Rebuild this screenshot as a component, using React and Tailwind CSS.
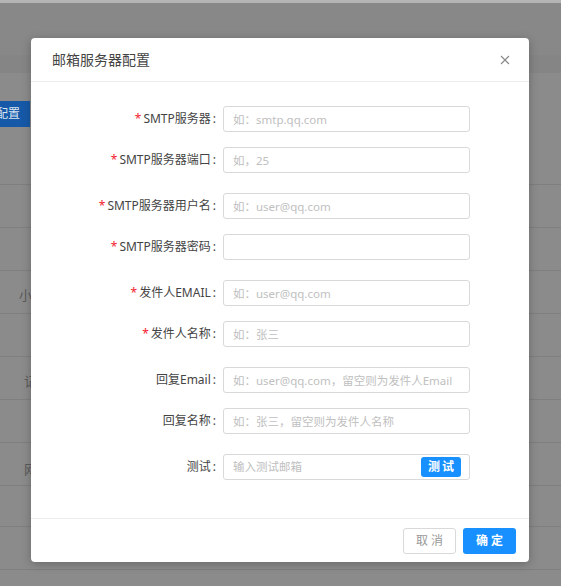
import React from 'react';

const fields = [
  { label: 'SMTP服务器', required: true, placeholder: '如：smtp.qq.com', gap: 'mb-[15px]' },
  { label: 'SMTP服务器端口', required: true, placeholder: '如，25', gap: 'mb-[20px]' },
  { label: 'SMTP服务器用户名', required: true, placeholder: '如：user@qq.com', gap: 'mb-[15px]' },
  { label: 'SMTP服务器密码', required: true, placeholder: '', gap: 'mb-[20px]' },
  { label: '发件人EMAIL', required: true, placeholder: '如：user@qq.com', gap: 'mb-[15px]' },
  { label: '发件人名称', required: true, placeholder: '如：张三', gap: 'mb-[20px]' },
  { label: '回复Email', required: false, placeholder: '如：user@qq.com，留空则为发件人Email', gap: 'mb-[15px]' },
  { label: '回复名称', required: false, placeholder: '如：张三，留空则为发件人名称', gap: 'mb-[20px]' },
];

const font = "font-['Noto_Sans','Noto_Sans_CJK_SC',sans-serif]";

// rows of the dimmed page behind the dialog
const BackgroundPage = () => (
  <div className="flex flex-col w-full h-full bg-[#8b8b8b]">
    <div className="h-[3px] bg-[#b5b5b5]" />
    <div className="h-[52px] bg-[#888888]" />
    <div className="h-[18px] bg-[#858585]" />
    <div className="h-[28px]" />
    <div className="h-[26px] w-[30px] bg-[#1659a8] overflow-hidden flex items-center">
      <span className="text-[12px] text-[#d8e4f2] whitespace-nowrap ml-[-4px]">配置</span>
    </div>
    <div className="h-[58px] border-b border-[#7f7f7f]" />
    <div className="h-[43px] border-b border-[#7f7f7f]" />
    <div className="h-[43px] border-b border-[#7f7f7f]" />
    <div className="h-[43px] border-b border-[#7f7f7f] flex items-end pl-[19px] pb-[8px]">
      <span className="text-[13px] text-[#5a5a5a]">小</span>
    </div>
    <div className="h-[43px] border-b border-[#7f7f7f]" />
    <div className="h-[43px] border-b border-[#7f7f7f] flex items-end pl-[24px] pb-[8px]">
      <span className="text-[13px] text-[#5a5a5a]">记</span>
    </div>
    <div className="h-[43px] border-b border-[#7f7f7f]" />
    <div className="h-[43px] border-b border-[#7f7f7f] flex items-end pl-[24px] pb-[6px]">
      <span className="text-[13px] text-[#5a5a5a]">网</span>
    </div>
    <div className="h-[41px] border-b border-[#7f7f7f]" />
    <div className="h-[43px] border-b border-[#7f7f7f]" />
    <div className="flex-1" />
  </div>
);

const FormRow = ({ label, required, placeholder, gap, children }) => (
  <div className={`flex items-center ${gap}`}>
    <label className="w-[171px] text-right text-[12px] text-[#444] pr-[7px] whitespace-nowrap">
      {required && <span className="text-[#f5222d] mr-[2px]">*</span>}
      {label}
      <span className="ml-[2px]">:</span>
    </label>
    {children || (
      <input
        className="w-[247px] h-[26px] border border-[#d9d9d9] rounded-[3px] pl-[9px] pr-[4px] text-[11.5px] placeholder:text-[#c0c0c0] outline-none"
        placeholder={placeholder}
      />
    )}
  </div>
);

export default function App() {
  return (
    <div className={`relative w-[561px] h-[586px] overflow-hidden ${font}`}>
      <BackgroundPage />

      <div className="absolute left-[31px] top-[38px] w-[498px] bg-white rounded-[4px] shadow-[0_2px_10px_rgba(0,0,0,0.25)] flex flex-col">
        <div className="h-[44px] flex items-center justify-between px-[21px] border-b border-[#ececec]">
          <span className="text-[14px] text-[#444]">邮箱服务器配置</span>
          <svg width="10" height="10" viewBox="0 0 10 10" className="mr-[-2px]">
            <path d="M1 1L9 9M9 1L1 9" stroke="#888" strokeWidth="1.1" fill="none" />
          </svg>
        </div>

        <div className="pt-[24px] pb-[18px] pl-[21px]">
          {fields.map(f => (
            <FormRow key={f.label} {...f} />
          ))}
          <FormRow label="测试" required={false} gap="mb-[20px]">
            <div className="w-[247px] h-[26px] border border-[#d9d9d9] rounded-[3px] pl-[9px] pr-[8px] flex items-center justify-between">
              <input
                className="flex-1 text-[11.5px] placeholder:text-[#c0c0c0] outline-none"
                placeholder="输入测试邮箱"
              />
              <button className="w-[40px] h-[20px] bg-[#1890ff] rounded-[3px] text-white text-[12px] font-bold tracking-[2px] pl-[2px]">
                测试
              </button>
            </div>
          </FormRow>
        </div>

        <div className="h-[44px] border-t border-[#ececec] flex items-center justify-end gap-[7px] pr-[13px]">
          <button className="w-[53px] h-[26px] border border-[#d9d9d9] rounded-[3px] text-[12px] text-[#999] tracking-[3px] pl-[3px]">
            取消
          </button>
          <button className="w-[53px] h-[26px] bg-[#1890ff] rounded-[3px] text-[12px] text-white font-bold tracking-[3px] pl-[3px]">
            确定
          </button>
        </div>
      </div>
    </div>
  );
}
